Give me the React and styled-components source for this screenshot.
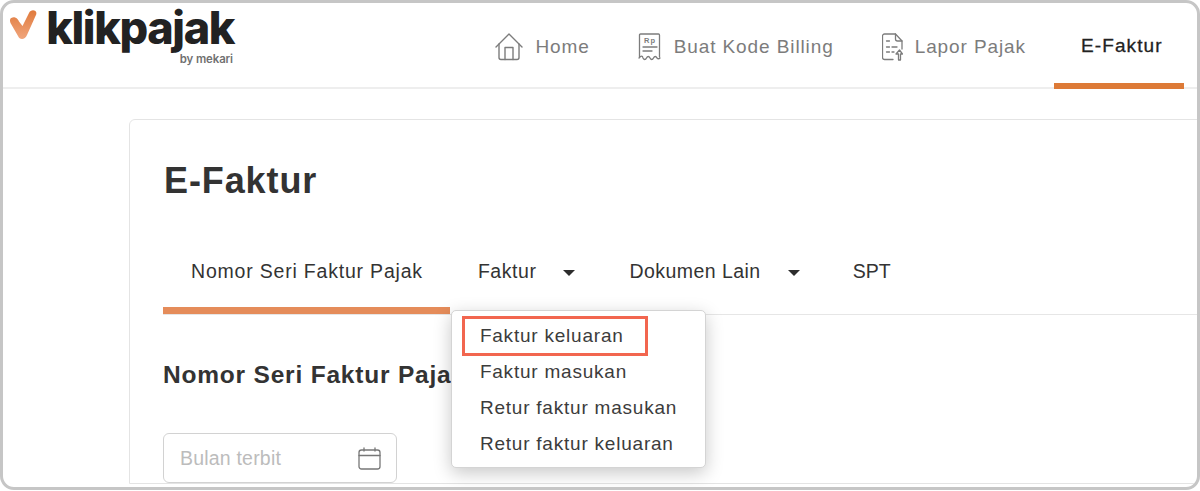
import React from "react";
import styled, { createGlobalStyle } from "styled-components";

const GlobalStyle = createGlobalStyle`
  html, body {
    margin: 0;
    background: #fff;
  }
`;

const Frame = styled.div`
  box-sizing: border-box;
  width: 1200px;
  height: 490px;
  border: 3px solid #c6c6c6;
  border-radius: 14px;
  overflow: hidden;
  background: #fff;
  font-family: "Liberation Sans", Arial, sans-serif;
  color: #333;
`;

const Header = styled.header`
  box-sizing: border-box;
  display: flex;
  height: 86px;
  padding-right: 13px;
  border-bottom: 2px solid #eeeeee;
`;

const Logo = styled.div`
  display: flex;
  align-items: flex-start;
  width: 240px;
`;

const LogoMark = styled.svg`
  flex: none;
  width: 27px;
  height: 32px;
  margin: 7px 0 0 7px;
`;

const LogoText = styled.div`
  display: flex;
  flex-direction: column;
  align-items: flex-end;
  width: 188px;
  margin-left: 9px;
`;

const LogoName = styled.span`
  font-family: Inter, sans-serif;
  font-weight: 800;
  font-size: 45px;
  line-height: 46px;
  letter-spacing: -1.4px;
  color: #222;
  margin-top: 2px;
  white-space: nowrap;
`;

const LogoBy = styled.span`
  font-family: Inter, sans-serif;
  font-weight: 600;
  font-size: 11.4px;
  line-height: 12px;
  letter-spacing: -0.1px;
  color: #707070;
  margin: 2px 1px 0 0;
`;

const Nav = styled.nav`
  display: flex;
  margin-left: auto;
`;

const NavItem = styled.a`
  display: flex;
  align-items: center;
  gap: 12px;
  height: 86px;
  padding: 2px 24px 0;
  box-sizing: border-box;
  font-size: 19px;
  letter-spacing: 0.9px;
  color: #7c7c7c;
`;

const ActiveNavItem = styled.a`
  box-sizing: border-box;
  width: 130px;
  height: 86px;
  padding: 5px 0 0 27px;
  display: flex;
  align-items: center;
  font-size: 19px;
  -webkit-text-stroke: 0.3px #222;
  letter-spacing: 1.1px;
  color: #222;
  border-bottom: 6px solid #dd7a37;
  margin-left: 4px;
`;

const Card = styled.main`
  box-sizing: border-box;
  width: 1160px;
  margin: 30px 0 0 126px;
  padding: 21px 0 0 33px;
  border: 1px solid #e4e4e4;
  border-radius: 6px 0 0 0;
`;

const Title = styled.h1`
  margin: 20px 0 0 1px;
  font-size: 36px;
  line-height: 40px;
  font-weight: 700;
  letter-spacing: 0.9px;
  color: #333;
`;

const Tabs = styled.div`
  display: flex;
  height: 84px;
  margin-top: 29px;
  border-bottom: 1px solid #e6e6e6;
`;

const Tab = styled.div`
  position: relative;
  box-sizing: border-box;
  display: flex;
  align-items: center;
  height: 84px;
  padding: 5px ${(p) => p.$right}px 0 ${(p) => p.$left}px;
  font-size: 19.5px;
  letter-spacing: ${(p) => p.$spacing}px;
  color: #333;
  border-bottom: 7px solid ${(p) => (p.$active ? "#e58c5a" : "transparent")};
`;

const Caret = styled.span`
  width: 0;
  height: 0;
  margin: 3px 0 0 27px;
  border-left: 6px solid transparent;
  border-right: 6px solid transparent;
  border-top: 6px solid #2d2d2d;
`;

const Menu = styled.ul`
  position: absolute;
  top: 80px;
  left: 1px;
  z-index: 2;
  box-sizing: border-box;
  width: 255px;
  height: 158px;
  margin: 0;
  padding: 7px 0;
  list-style: none;
  background: #fff;
  border: 1px solid #d4d4d4;
  border-radius: 5px;
  box-shadow: 0 5px 18px rgba(0, 0, 0, 0.22);
`;

const MenuItem = styled.li`
  box-sizing: border-box;
  height: 36px;
  line-height: 36px;
  font-size: 19px;
  letter-spacing: 0.78px;
  color: #3c3c3c;
  white-space: nowrap;
  padding-left: 28px;
`;

const MenuItemMarked = styled(MenuItem)`
  width: 182px;
  margin-left: 12px;
  padding-left: 16px;
  outline: 3px solid #f2664f;
  outline-offset: -1px;
`;

const SectionTitle = styled.h2`
  margin: 45px 0 0 0;
  font-size: 24.5px;
  line-height: 30px;
  font-weight: 700;
  letter-spacing: 0.8px;
  color: #333;
`;

const DateField = styled.div`
  box-sizing: border-box;
  display: flex;
  align-items: center;
  justify-content: space-between;
  width: 234px;
  height: 50px;
  margin-top: 43px;
  padding: 1px 14px 0 16px;
  border: 1px solid #d2d2d2;
  border-radius: 6px;
  font-size: 19.5px;
  letter-spacing: 0.2px;
  color: #bcbcbc;
`;

const HomeIcon = () => (
  <svg width="28" height="28" viewBox="0 0 28 28" fill="none" stroke="#7c7c7c" strokeWidth="1.4" strokeLinejoin="round" strokeLinecap="round">
    <path d="M1 14 14 1l13 13" />
    <path d="M4 11v13.500a2 2 0 0 0 2 2h16a2 2 0 0 0 2-2V11" />
    <path d="M10 26.500V14.500h8v12" />
  </svg>
);

const BillingIcon = () => (
  <svg width="24" height="28" viewBox="0 0 24 28" fill="none" stroke="#7c7c7c" strokeWidth="1.3" strokeLinejoin="round" strokeLinecap="round">
    <path d="M1.500 24V2a1 1 0 0 1 1-1h18a1 1 0 0 1 1 1v22" />
    <path d="M1 25c2-2.500 3.500-2.500 4 0 1 2 2.500 2 3.500 0 1-2 2.500-2 3.500 0 1 2 2.500 2 3.500 0 1-2 2.500-2 3.500 0 .8 1 2 1 3 0" />
    <text x="12" y="10" fontSize="7.500" fontWeight="700" fontFamily="Liberation Sans" textAnchor="middle" fill="#7c7c7c" stroke="none">Rp</text>
    <path d="M5 14h14M5 18h9" />
  </svg>
);

const ReportIcon = () => (
  <svg width="21" height="28" viewBox="0 0 21 28" fill="none" stroke="#7c7c7c" strokeWidth="1.3" strokeLinejoin="round" strokeLinecap="round">
    <path d="M11 26.500H2.500a2 2 0 0 1-2-2V3a2 2 0 0 1 2-2h11l6.500 7v8" />
    <path d="M13.500 1v5a2 2 0 0 0 2 2H20" />
    <path d="M4.500 8h3M4.500 14h3M10 14h5M4.500 19h3M10 19h2" />
    <path d="M16.500 27v-6H14l3.500-4 3 4h-2v6z" />
  </svg>
);

const CalendarIcon = () => (
  <svg width="24" height="23" viewBox="0 0 24 23" fill="none" stroke="#777" strokeWidth="1.3" strokeLinejoin="round" strokeLinecap="round">
    <rect x="1" y="3" width="21" height="19" rx="2.500" />
    <path d="M1 8.500h21M6 1v3M17 1v3" />
  </svg>
);

export default function App() {
  return (
    <>
      <GlobalStyle />
      <Frame>
        <Header>
          <Logo>
            <LogoMark viewBox="0 0 27 32">
              <defs>
                <linearGradient id="markFill" x1="0" y1="0" x2="0" y2="1">
                  <stop offset="0" stopColor="#e07a3c" />
                  <stop offset="1" stopColor="#f0a57c" />
                </linearGradient>
              </defs>
              <path
                d="M0 10c0-2 3-3 5-2.500 2 .5 3 2 4 4l3.500 4.500L19 3c1-2.500 4-3.500 6-2.300 2 1.300 1.500 3.800.5 5.300L17 25c-2 5-7.500 5-9 1L.5 13C0 12 0 11 0 10z"
                fill="url(#markFill)"
              />
            </LogoMark>
            <LogoText>
              <LogoName>klikpajak</LogoName>
              <LogoBy>by mekari</LogoBy>
            </LogoText>
          </Logo>
          <Nav>
            <NavItem><HomeIcon />Home</NavItem>
            <NavItem><BillingIcon />Buat Kode Billing</NavItem>
            <NavItem><ReportIcon />Lapor Pajak</NavItem>
            <ActiveNavItem>E-Faktur</ActiveNavItem>
          </Nav>
        </Header>
        <Card>
          <Title>E-Faktur</Title>
          <Tabs>
            <Tab $active $spacing={0.8} $left={28} $right={27}>Nomor Seri Faktur Pajak</Tab>
            <Tab $spacing={0.55} $left={28} $right={54}>
              Faktur<Caret />
              <Menu>
                <MenuItemMarked>Faktur keluaran</MenuItemMarked>
                <MenuItem>Faktur masukan</MenuItem>
                <MenuItem>Retur faktur masukan</MenuItem>
                <MenuItem>Retur faktur keluaran</MenuItem>
              </Menu>
            </Tab>
            <Tab $spacing={0.45} $left={0} $right={53}>Dokumen Lain<Caret /></Tab>
            <Tab $spacing={0} $left={0} $right={0}>SPT</Tab>
          </Tabs>
          <SectionTitle>Nomor Seri Faktur Pajak</SectionTitle>
          <DateField>
            Bulan terbit
            <CalendarIcon />
          </DateField>
        </Card>
      </Frame>
    </>
  );
}
